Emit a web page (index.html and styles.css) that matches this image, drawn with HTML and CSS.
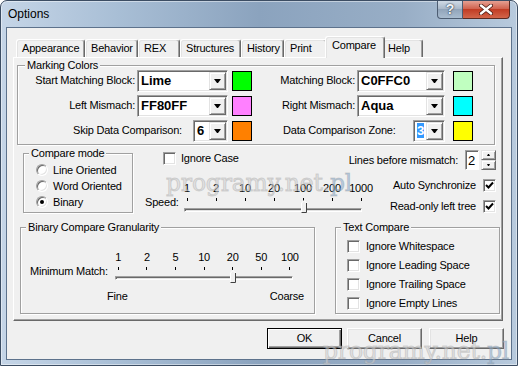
FILE: index.html
```html
<!DOCTYPE html>
<html lang="en">
<head>
	<meta charset="UTF-8">
	<title>Options</title>
	<link rel="stylesheet" href="styles.css">
</head>
<body>
	<div class="window">
		<div class="titlebar">
			<span class="title">Options</span>
			<div class="caption">
				<span class="cap-help">?</span>
				<span class="cap-close"><svg width="14" height="11" viewBox="0 0 14 11"><path d="M2 1.5 L12 9.5 M12 1.5 L2 9.5" stroke="#4a1a12" stroke-width="4" stroke-linecap="round"/><path d="M2 1.5 L12 9.5 M12 1.5 L2 9.5" stroke="#fff" stroke-width="2.4" stroke-linecap="round"/></svg></span>
			</div>
		</div>
		<div class="client">
			<div class="tabctl">
				<div class="tabrow">
					<span class="tab t-app">Appearance</span>
					<span class="tab t-beh">Behavior</span>
					<span class="tab t-rex">REX</span>
					<span class="tab t-str">Structures</span>
					<span class="tab t-his">History</span>
					<span class="tab t-pri">Print</span>
					<span class="tab t-cmp sel">Compare</span>
					<span class="tab t-hlp">Help</span>
				</div>
				<div class="panel">
					<div class="group marking">
						<span class="legend">Marking Colors</span>
						<div class="mc-grid">
							<span class="mc-label">Start Matching Block:</span>
							<div class="combo"><span class="val">Lime</span><span class="drop"><i></i></span></div>
							<span class="swatch sw-lime"></span>
							<span class="mc-label">Matching Block:</span>
							<div class="combo"><span class="val">C0FFC0</span><span class="drop"><i></i></span></div>
							<span class="swatch sw-mint"></span>

							<span class="mc-label">Left Mismach:</span>
							<div class="combo"><span class="val">FF80FF</span><span class="drop"><i></i></span></div>
							<span class="swatch sw-pink"></span>
							<span class="mc-label">Right Mismach:</span>
							<div class="combo"><span class="val">Aqua</span><span class="drop"><i></i></span></div>
							<span class="swatch sw-aqua"></span>

							<span class="mc-label r3 skip-label">Skip Data Comparison:</span>
							<div class="combo small r3 skip-combo"><span class="val">6</span><span class="drop"><i></i></span></div>
							<span class="swatch sw-orange r3 c3"></span>
							<span class="mc-label r3 zone-label">Data Comparison Zone:</span>
							<div class="combo small r3 zone-combo"><span class="val"><b class="hl">3</b></span><span class="drop"><i></i></span></div>
							<span class="swatch sw-yellow r3 c6"></span>
						</div>
					</div>

					<div class="mid">
						<div class="group cmode">
							<span class="legend">Compare mode</span>
							<div class="radio-row"><span class="radio"></span>Line Oriented</div>
							<div class="radio-row"><span class="radio"></span>Word Oriented</div>
							<div class="radio-row"><span class="radio on"></span>Binary</div>
						</div>
						<div class="mid-col">
							<div class="check-row ignore"><span class="check"></span>Ignore Case</div>
							<div class="speed">
								<span class="speed-label">Speed:</span>
								<div class="slider s-speed">
									<div class="scale">
										<span class="mark">1</span>
										<span class="mark">2</span>
										<span class="mark">10</span>
										<span class="mark">20</span>
										<span class="mark">100</span>
										<span class="mark">200</span>
										<span class="mark">1000</span>
									</div>
									<div class="track"></div>
									<svg class="thumb" width="6" height="13" viewBox="0 0 6 13"><path d="M0.5 12.5 V3 L3 0.5 L5.5 3 V12.5 Z" fill="#f0f0f0" stroke="#fff"/><path d="M5.5 3 V12.5 H0.5" fill="none" stroke="#404040"/></svg>
								</div>
							</div>
						</div>
						<div class="right-col">
							<div class="lines-row">
								<span>Lines before mismatch:</span>
								<span class="spin-edit">2</span>
								<span class="spin"><span class="spin-btn"><i class="up"></i></span><span class="spin-btn"><i class="dn"></i></span></span>
							</div>
							<div class="check-row rt auto">Auto Synchronize<span class="check"><svg width="9" height="9" viewBox="0 0 9 9"><polyline points="1,4 3.5,6.5 8,1.5" fill="none" stroke="#000" stroke-width="2"/></svg></span></div>
							<div class="check-row rt ro">Read-only left tree<span class="check"><svg width="9" height="9" viewBox="0 0 9 9"><polyline points="1,4 3.5,6.5 8,1.5" fill="none" stroke="#000" stroke-width="2"/></svg></span></div>
						</div>
					</div>

					<div class="bottom">
						<div class="group gran">
							<span class="legend">Binary Compare Granularity</span>
							<div class="gran-row">
								<span class="mm-label">Minimum Match:</span>
								<div class="slider s-gran">
									<div class="scale">
										<span class="mark">1</span>
										<span class="mark">2</span>
										<span class="mark">5</span>
										<span class="mark">10</span>
										<span class="mark">20</span>
										<span class="mark">50</span>
										<span class="mark">100</span>
									</div>
									<div class="track"></div>
									<svg class="thumb" width="6" height="13" viewBox="0 0 6 13"><path d="M0.5 12.5 V3 L3 0.5 L5.5 3 V12.5 Z" fill="#f0f0f0" stroke="#fff"/><path d="M5.5 3 V12.5 H0.5" fill="none" stroke="#404040"/></svg>
								</div>
							</div>
							<div class="fine-row"><span>Fine</span><span>Coarse</span></div>
						</div>
						<div class="group tcomp">
							<span class="legend">Text Compare</span>
							<div class="check-row tc"><span class="check"></span>Ignore Whitespace</div>
							<div class="check-row tc"><span class="check"></span>Ignore Leading Space</div>
							<div class="check-row tc"><span class="check"></span>Ignore Trailing Space</div>
							<div class="check-row tc"><span class="check"></span>Ignore Empty Lines</div>
						</div>
					</div>
				</div>
			</div>
			<div class="buttons">
				<span class="btn default">OK</span>
				<span class="btn cancel">Cancel</span>
				<span class="btn">Help</span>
			</div>
		</div>
		<div class="wm wm1">programy.net.<span>pl</span></div>
		<div class="wm wm2">programy.net.<span>pl</span></div>
	</div>
</body>
</html>
```

FILE: styles.css
```css
body {
	margin: 0;
	background: #fff;
	font: 11px/13px "Liberation Sans", Arial, sans-serif;
	color: #000;
	letter-spacing: -0.2px;
}
.window {
	position: relative;
	width: 518px;
	height: 366px;
	box-sizing: border-box;
	border: 1px solid #3c4d63;
	border-radius: 7px 7px 0 0;
	background: linear-gradient(to right, #c5d5e7 0%, #a9bfd6 22%, #8ba3be 50%, #98aec6 78%, #b8cadd 100%);
	box-shadow: inset 0 0 0 1px rgba(255,255,255,.45);
	display: flex;
	flex-direction: column;
	overflow: hidden;
}

/* title bar */
.titlebar {
	height: 27px;
	flex-shrink: 0;
	display: flex;
	justify-content: space-between;
}
.title {
	padding: 6px 0 0 7px;
	font-size: 12px;
	line-height: 14px;
	letter-spacing: 0;
}
.caption {
	display: flex;
	height: 19px;
	margin: -1px 7px 0 0;
}
.cap-help, .cap-close {
	box-sizing: border-box;
	height: 19px;
	display: flex;
	align-items: center;
	justify-content: center;
	border: 1px solid #4d5d72;
	border-top: none;
}
.cap-help {
	width: 26px;
	border-radius: 0 0 0 4px;
	background: linear-gradient(#d5dfea, #aab9ca 48%, #91a4ba 52%, #a9bccf);
	color: #eef3f8;
	font: bold 14px/17px "Liberation Sans", sans-serif;
	text-shadow: 0 0 2px #2e3b4c, 0 0 1px #2e3b4c;
}
.cap-close {
	width: 47px;
	border-left: none;
	border-color: #5a2a22;
	border-radius: 0 0 4px 0;
	background: linear-gradient(#e8a89b, #d1634f 48%, #c13c24 52%, #d2654a);
}

/* client */
.client {
	flex: 1;
	margin: 0 6px 6px;
	background: #f0f0f0;
	box-shadow: 0 0 0 1px #5d728c;
}
.tabctl {
	width: 490px;
	margin: 8px 0 0 6px;
}
.tabrow {
	height: 21px;
	padding-left: 3px;
	display: flex;
	align-items: flex-end;
}
.tab {
	box-sizing: border-box;
	height: 18px;
	padding: 2px 0 0 5px;
	border: 1px solid;
	border-color: #fff #696969 transparent #fff;
	border-bottom: none;
	border-radius: 3px 3px 0 0;
	box-shadow: inset -1px 0 0 #a0a0a0, inset 1px 1px 0 #e3e3e3;
	white-space: nowrap;
}
.tab.sel {
	position: relative;
	z-index: 1;
	height: 22px;
	margin: 0 -2px -1px;
	padding: 2px 0 0 6px;
	background: #f0f0f0;
}
.t-app { width: 69px; }
.t-beh { width: 53px; }
.t-rex { width: 42px; }
.t-str { width: 61px; }
.t-his { width: 43px; }
.t-pri { width: 43px; }
.t-cmp { width: 60px; }
.t-hlp { width: 40px; padding-left: 4px; }

.panel {
	height: 264px;
	box-sizing: border-box;
	border: 1px solid;
	border-color: #fff #696969 #696969 #fff;
	box-shadow: inset -1px -1px 0 #a0a0a0;
}

/* group boxes */
.group {
	box-sizing: border-box;
	flex-shrink: 0;
	border: 1px solid #a0a0a0;
	box-shadow: inset 1px 1px 0 #fff, 1px 1px 0 #fff;
}
.legend {
	display: block;
	width: max-content;
	margin: -7px 0 0 5px;
	padding: 0 2px;
	background: #f0f0f0;
}
.marking {
	width: 478px;
	height: 80px;
	margin: 7px 0 0 3px;
}
.marking .legend { margin-left: 7px; }

.mc-grid {
	display: grid;
	grid-template-columns: 119px 91px 24px 105px 88px 28px;
	grid-auto-rows: 25px;
	align-items: center;
	margin-top: -4px;
}
.mc-label {
	text-align: right;
	padding-right: 2px;
	white-space: nowrap;
}
.r3 { grid-row: 3; }
.skip-label { grid-column: 1 / span 2; text-align: left; padding-left: 55px; }
.skip-combo { grid-column: 2; justify-self: end; width: 35px; }
.zone-label { grid-column: 4 / span 2; text-align: left; padding-left: 31px; }
.zone-combo { grid-column: 5; justify-self: end; width: 32px; }
.c3 { grid-column: 3; }
.c6 { grid-column: 6; }

.combo {
	box-sizing: border-box;
	height: 22px;
	padding: 1px;
	display: flex;
	background: #fff;
	border: 1px solid;
	border-color: #a0a0a0 #fff #fff #a0a0a0;
	box-shadow: inset 1px 1px 0 #696969, inset -1px -1px 0 #e3e3e3;
}
.combo .val {
	flex: 1;
	padding: 1px 0 0 2px;
	font: bold 13px/16px "Liberation Sans", Arial, sans-serif;
	letter-spacing: 0;
	overflow: hidden;
}
.hl {
	background: #3399ff;
	color: #fff;
}
.drop, .spin-btn {
	box-sizing: border-box;
	display: flex;
	align-items: center;
	justify-content: center;
	background: #f0f0f0;
	border: 1px solid;
	border-color: #e3e3e3 #696969 #696969 #e3e3e3;
	box-shadow: inset 1px 1px 0 #fff, inset -1px -1px 0 #a0a0a0;
}
.drop {
	width: 17px;
	height: 18px;
}
.drop i {
	width: 1px;
	height: 0;
	border-left: 3px solid transparent;
	border-right: 3px solid transparent;
	border-top: 4px solid #000;
}
.swatch {
	width: 20px;
	height: 20px;
	box-sizing: border-box;
	border: 1px solid #000;
	justify-self: end;
}
.sw-lime { background: #00ff00; }
.sw-mint { background: #c0ffc0; }
.sw-pink { background: #ff80ff; }
.sw-aqua { background: #00ffff; }
.sw-orange { background: #ff8000; }
.sw-yellow { background: #ffff00; }

/* middle */
.mid {
	height: 75px;
	display: flex;
}
.cmode {
	width: 110px;
	height: 60px;
	margin: 8px 0 0 9px;
}
.radio-row {
	height: 16px;
	display: flex;
	align-items: center;
	gap: 5px;
	padding-left: 12px;
	white-space: nowrap;
}
.cmode .legend + .radio-row { margin-top: 2px; }
.radio {
	width: 12px;
	height: 12px;
	box-sizing: border-box;
	flex-shrink: 0;
	border-radius: 50%;
	border: 1px solid;
	border-color: #a0a0a0 #fff #fff #a0a0a0;
	box-shadow: inset 1px 1px 0 #696969, inset -1px -1px 0 #e3e3e3;
	background: #fff;
	display: flex;
	align-items: center;
	justify-content: center;
}
.radio.on::after {
	content: '';
	width: 4px;
	height: 4px;
	border-radius: 50%;
	background: #000;
}
.check {
	width: 13px;
	height: 13px;
	box-sizing: border-box;
	border: 1px solid;
	border-color: #a0a0a0 #fff #fff #a0a0a0;
	box-shadow: inset 1px 1px 0 #696969, inset -1px -1px 0 #e3e3e3;
	background: #fff;
	display: flex;
	align-items: center;
	justify-content: center;
	flex-shrink: 0;
}
.check-row {
	display: flex;
	align-items: center;
	gap: 5px;
	white-space: nowrap;
}
.mid-col {
	flex: 1;
	min-width: 0;
	margin-left: 12px;
}
.ignore {
	height: 13px;
	margin: 7px 0 0 18px;
}
.speed {
	display: flex;
	margin-top: 17px;
}
.speed-label {
	width: 27.5px;
	flex-shrink: 0;
	margin-top: 14px;
}
.slider {
	position: relative;
	flex-shrink: 0;
}
.scale {
	display: flex;
}
.mark {
	display: flex;
	flex-direction: column;
	align-items: center;
	flex-shrink: 0;
	line-height: 12px;
}
.mark::after {
	content: '';
	width: 1px;
	height: 3px;
	margin-top: 4px;
	background: #000;
}
.s-speed .mark { width: 29px; }
.track {
	box-sizing: border-box;
	height: 4px;
	width: 178px;
	border: 1px solid;
	border-color: #a0a0a0 #fff #fff #a0a0a0;
	box-shadow: inset 1px 1px 0 #696969;
	background: #e3e3e3;
}
.s-speed .track { margin: 7px 0 0 11.5px; }
.thumb {
	position: absolute;
}
.s-speed .thumb { left: 128px; top: 18px; }

.right-col {
	flex-shrink: 0;
	margin: 0 6px 0 auto;
	display: flex;
	flex-direction: column;
	align-items: flex-end;
}
.lines-row {
	height: 20px;
	margin-top: 5px;
	display: flex;
	align-items: center;
	white-space: nowrap;
}
.spin-edit {
	box-sizing: border-box;
	width: 14px;
	height: 20px;
	margin-left: 7px;
	padding: 3px 0 0 2px;
	font-size: 13px;
	line-height: 14px;
	background: #fff;
	border: 1px solid;
	border-color: #a0a0a0 #fff #fff #a0a0a0;
	box-shadow: inset 1px 1px 0 #696969;
}
.spin {
	display: flex;
	flex-direction: column;
	margin-left: 2px;
}
.spin-btn {
	width: 15px;
	height: 10px;
}
.spin-btn i {
	width: 1px;
	height: 0;
	border-left: 1px solid transparent;
	border-right: 1px solid transparent;
}
.spin-btn .up { border-bottom: 2px solid #000; }
.spin-btn .dn { border-top: 2px solid #000; }
.rt { gap: 7px; height: 13px; }
.auto { margin-top: 9px; }
.ro { margin-top: 8px; }

/* bottom */
.bottom {
	display: flex;
	margin-top: 7px;
}
.gran {
	width: 295px;
	height: 87px;
	margin-left: 6px;
}
.gran-row {
	display: flex;
	margin-top: 17px;
}
.mm-label {
	width: 74px;
	margin: 14px 0 0 9px;
	white-space: nowrap;
}
.s-gran .mark { width: 28.6px; }
.s-gran .track { margin: 6px 0 0 11px; }
.s-gran .thumb { left: 126px; top: 19px; }
.fine-row {
	display: flex;
	justify-content: space-between;
	margin-top: 10px;
	padding: 0 10px 0 86px;
}
.tcomp {
	width: 165px;
	height: 87px;
	margin-left: 20px;
}
.tc {
	height: 19px;
	padding-left: 11px;
	gap: 6px;
}
.tcomp .legend + .tc { margin-top: 3px; }

/* buttons */
.buttons {
	display: flex;
	justify-content: flex-end;
	margin: 7px 7px 0 0;
}
.btn {
	box-sizing: border-box;
	width: 75px;
	height: 21px;
	display: flex;
	align-items: center;
	justify-content: center;
	border: 1px solid;
	border-color: #fff #696969 #696969 #fff;
	box-shadow: inset -1px -1px 0 #a0a0a0, inset 1px 1px 0 #e3e3e3;
}
.btn.default {
	border-color: #000;
	box-shadow: inset 1px 1px 0 #fff, inset -1px -1px 0 #696969, inset -2px -2px 0 #a0a0a0;
	margin-right: 5px;
}
.btn.cancel { margin-right: 7px; }

/* watermark */
.wm {
	position: absolute;
	font: 23.5px/25px "DejaVu Serif", serif;
	color: rgba(215, 215, 215, .55);
	-webkit-text-stroke: 1px rgba(150, 150, 150, .35);
	white-space: nowrap;
}
.wm span { color: rgba(130, 170, 210, .55); }
.wm1 { left: 165px; top: 170px; }
.wm2 { left: 322px; top: 338px; }
```
